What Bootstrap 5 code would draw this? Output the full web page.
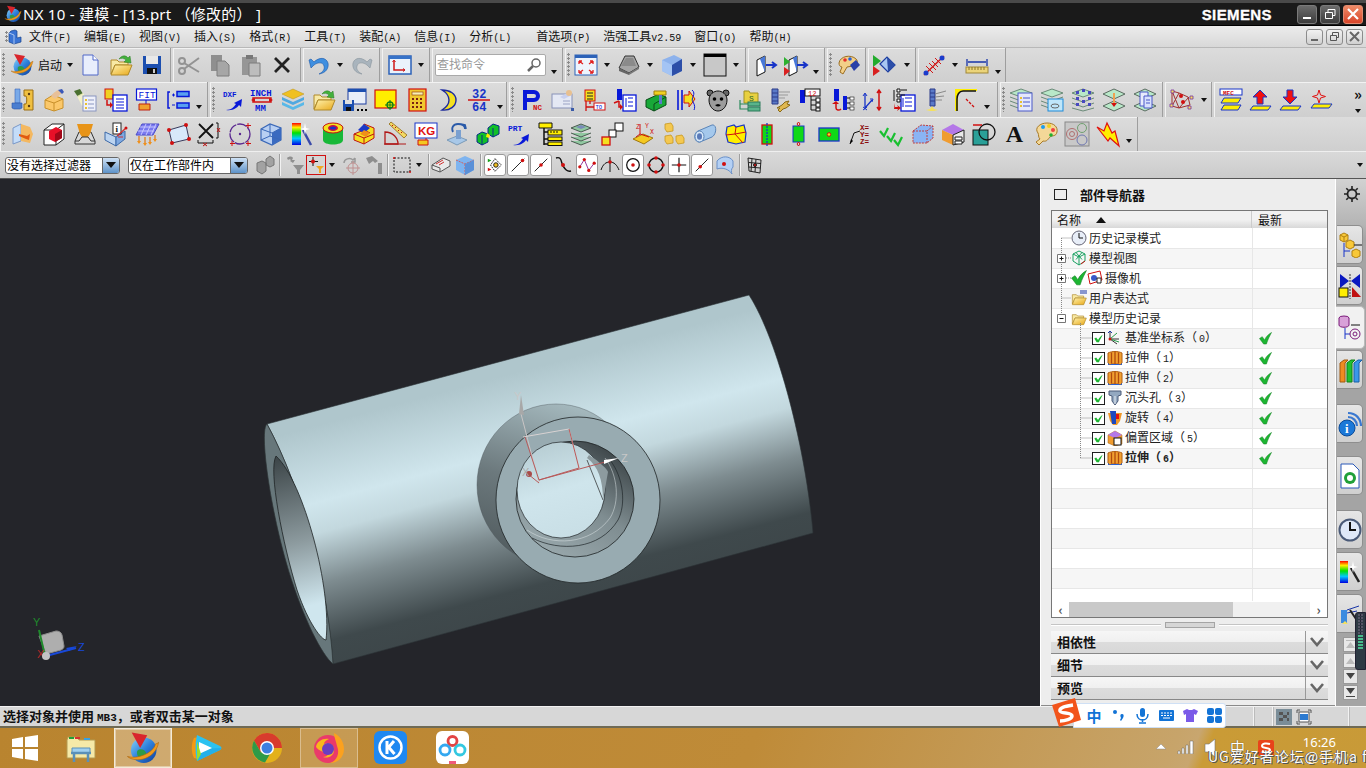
<!DOCTYPE html>
<html lang="zh">
<head>
<meta charset="UTF-8">
<title>NX 10 - 建模</title>
<link href="https://cdn.jsdelivr.net/npm/bootstrap@5.3.2/dist/css/bootstrap.min.css" rel="stylesheet">
<style>
body{width:1366px;height:768px;overflow:hidden;background:#d4d4d4;font-family:"Noto Sans CJK SC","Liberation Sans",sans-serif;font-size:12px;line-height:1;color:#111}
.svgdefs{position:absolute;width:0;height:0}
.mono{font-family:"Liberation Mono",monospace;font-size:10px}
.titlebar{height:26px;background:#1a1a1a;border-top:3px solid #4a4a4a;border-bottom:1px solid #000;color:#fff;padding-left:4px}
.titlebar .ttl{font-size:15px;margin-left:1px;letter-spacing:.25px;font-family:"Noto Sans","Noto Sans CJK SC",sans-serif;white-space:pre}
.siemens{font:bold 15px "Liberation Sans",sans-serif;letter-spacing:.4px;margin-right:25px;-webkit-text-stroke:.3px #fff}
.winbtn{width:20px;height:19px;margin-right:3px;border-radius:3px;background:linear-gradient(#6b6b6b,#3c3c3c);border:1px solid #7a7a7a;display:flex;align-items:center;justify-content:center}
.winbtn.cls{background:linear-gradient(#ee8a66,#d9452a);border-color:#e08a70}
.menubar{height:22px;background:linear-gradient(#ececec,#d8d8d8);border-bottom:1px solid #b8b8b8;padding-left:3px}
.menubar .mi{white-space:nowrap}
.mdibtn{width:17px;height:16px;margin-right:3px;border:1px solid #8c8c8c;border-radius:3px;background:linear-gradient(#f2f2f2,#d0d0d0);display:flex;align-items:center;justify-content:center}
.me-mn{margin-right:13px}.me-mx{margin-right:25px}.menuitems{margin-left:7px}
.tbrow{background:linear-gradient(#dcdcdc,#cfcfcf)}
.r1{height:34px}.r2{height:35px}.r3{height:34px}
.r4{height:28px;background:linear-gradient(#d9d9d9,#cbcbcb);border-top:1px solid #efefef;border-bottom:1px solid #555}
.tg{height:100%;display:flex;align-items:center;border-right:1px solid #9e9e9e;box-shadow:inset 1px 1px 0 #f2f2f2;flex:none;margin-right:2px}
.tg.bare{border-right:0;margin-right:0}
.grip{width:5px;align-self:stretch;margin:5px 0;flex:none;background:radial-gradient(circle at 1.5px 1.5px,#8a8a8a 1px,transparent 1.2px) 2px 0/3px 4px repeat-y}
.tb{width:31px;height:100%;display:flex;align-items:center;justify-content:center;flex:none}
.tb.nw{width:29px}
.tb svg{width:24px;height:24px;overflow:visible}
.cr{width:12px;flex:none;display:flex;justify-content:center}
.cr::after{content:"";border-left:3.5px solid transparent;border-right:3.5px solid transparent;border-top:4px solid #111}
.cr.lo{align-self:flex-end;margin-bottom:8px}
.qfind{width:111px;height:22px;margin:0 2px 0 3px;background:#fff;border:1px solid #aaa;border-radius:2px;color:#999;padding:3px 1px;position:relative;flex:none}
.qfind svg{position:absolute;right:3px;top:2px;width:16px;height:16px}
.combo{height:17px;background:#fff;border:1px solid #666;border-radius:3px;display:flex;align-items:center;padding-left:1px;flex:none;font-size:12px;color:#000}
.combo .lab{flex:1}
.combo .dd{width:17px;height:100%;background:linear-gradient(#cfe2f6,#5d92c8);border-left:1px solid #666;display:flex;align-items:center;justify-content:center;border-radius:0 2px 2px 0}
.combo .dd::after{content:"";border-left:5px solid transparent;border-right:5px solid transparent;border-top:6px solid #111}
.c1{width:115px;margin-left:5px}.c2{width:120px;margin-left:8px}
.t4{width:23px;height:100%;display:flex;align-items:center;justify-content:center;flex:none}
.t4 svg{width:20px;height:20px}
.t4.boxed svg{background:#fff;border:1px solid #999;border-radius:3px;width:22px;height:22px;padding:1px}
.workarea{height:527px}
.viewport{width:1040px;background:#24252a;flex:none}
.viewport svg{display:block;width:1040px;height:527px}
.partnav{width:296px;flex:none;background:#ededed;border-left:1px solid #fff;border-right:1px solid #fff;padding:0 7px 0 10px;box-shadow:inset 0 -1px 0 #8a8a8a}
.navhead{height:31px;font-weight:700;font-size:13px;padding-left:3px}
.navhead i{display:block;width:13px;height:11px;border:1.5px solid #222;margin-right:13px}
.treebox{height:408px;border:1px solid #777;background:#fff;position:relative;width:277px;flex:none}
.treehead{height:17px;background:linear-gradient(#f2f2f2 0,#f2f2f2 50%,#d8d8d8 100%)}
.treehead>div:first-child{width:200px;padding:3px 0 0 5px;border-right:1px solid #ccc;height:100%;display:flex}
.treehead>div:last-child{padding:3px 0 0 6px}
.sorttri{margin:3px 0 0 15px;border-left:5px solid transparent;border-right:5px solid transparent;border-bottom:6px solid #111;height:0}
.treescroll{height:373px;overflow:hidden;position:relative}
.nav-tbl{table-layout:fixed;margin:0;width:100%}
.nav-tbl td{height:20px;padding:0;border:0;border-bottom:1px solid #e7e7e7;vertical-align:middle;font-size:12px;color:#222;background:#fff;white-space:nowrap}
.nav-tbl tr:nth-child(even) td{background:#f6f6f6}
.nav-tbl td:first-child{width:200px;border-right:1px solid #e7e7e7}
.nav-tbl .lv0{padding-left:19px}
.nav-tbl .lv1{padding-left:40px}
.nodecell{display:flex;align-items:center;height:19px}
.nodecell svg{width:16px;height:16px;flex:none}
.nodecell .chk{width:13px;height:13px;margin-right:2px}
.nodecell span{margin-left:2px}
.okcol{padding-left:6px!important}
.okcol svg{width:13px;height:13px;display:block}
.treelines{position:absolute;left:0;top:0;width:60px;height:240px;pointer-events:none}
.hscroll{height:16px;background:#fff;display:flex;align-items:center;position:relative}
.hscroll .hb{width:17px;text-align:center;font-weight:700;color:#555;font-size:13px;flex:none}
.hscroll .trk{flex:1;height:15px;background:#f0f0f0}
.hscroll .thm{width:164px;height:15px;background:#c9c9c9}
.sash{height:13px;flex:none}
.sash i{flex:1;height:1px;background:#c4c4c4;border-bottom:1px solid #fff;box-sizing:content-box}
.sash b{width:50px;height:6px;margin:0 4px;background:#d6d6d6;border:1px solid #a5a5a5;display:block}
.accbar{height:23px;width:277px;flex:none;background:linear-gradient(#f6f6f6 0,#f0f0f0 50%,#dcdcdc 52%,#d8d8d8 100%);border-bottom:1px solid #888;display:flex;align-items:center;font-weight:700;font-size:13px;padding-left:6px}
.accbar .lbl{flex:1;padding-bottom:2px}
.accbar .chev{width:23px;height:100%;border-left:1px solid #999;display:flex;align-items:center;justify-content:center}
.sidebar{flex:1;background:linear-gradient(#d2d2d2 0,#b4b4b4 46px,#a4a4a4 60px);position:relative;padding-left:1px}
.gearcell{height:46px;padding-left:7px;padding-top:7px}
.stab{width:26px;height:39px;background:linear-gradient(#e6e6e6,#cfcfcf);border:1px solid #8e8e8e;border-left:0;border-radius:0 5px 5px 0;display:flex;align-items:center;justify-content:center}
.stab svg{width:24px;height:26px}
.stab.on{width:29px;height:43px;background:#f1f1f1;border-color:#bbb;margin-left:-1px}
.s1{margin-top:1px}.s2{margin-top:2px}.s3{margin-top:3px}.s13{margin-top:13px}.s15{margin-top:15px}
.sbtn{width:15px;height:15px;margin:1px 0 0 6px;background:#e8e8e8;border:1px solid #999;display:flex;align-items:center;justify-content:center}
.sbtn.first{margin-top:4px}
.sldr{position:absolute;right:0;top:433px;width:11px;height:58px;background:#2e3a44;border-radius:3px 0 0 3px;border:1px solid #223}
.sldr i{display:block;height:2px;margin:1px 2px;background:repeating-linear-gradient(90deg,#556 0 2px,#223 2px 3px)}
.sldr i.g{background:#46b98a}
.statusbar{height:22px;background:#d7d7d7;border-top:1px solid #f2f2f2;border-bottom:2px solid #6f6a55;font-weight:700;font-size:13px;padding-left:3px}
.statusbar .mono{font-size:11px}
.stcell{height:100%;border-left:1px solid #f2f2f2;box-shadow:inset 1px 0 0 #bbb}
.taskbar{height:40px;background:linear-gradient(111deg,#b9842f 0,#bf8b38 55%,#c7a46a 85.5%,#c8a66f 87%,#ca9b36 88%,#c89a38 100%);position:relative}
.tkitem{width:58px;height:40px;display:flex;align-items:center;justify-content:center;flex:none;margin-right:4px}
.tkitem svg{width:34px;height:34px}
.tkitem.cur{background:rgba(255,255,255,.3);border:1px solid #f3ead8;box-shadow:inset 0 0 0 1px rgba(255,255,255,.4)}
.tkitem.hot{background:rgba(255,255,255,.16);border:1px solid rgba(255,255,255,.35)}
.tray{margin-left:auto;height:100%;position:relative;width:226px;color:#fff}
.clock{position:absolute;right:30px;top:5px;font:13px "Noto Sans",sans-serif}
.trayic{position:absolute}
.wm{position:absolute;left:68px;top:21px;color:#fdfdfd;text-shadow:1px 1px 0 #555,-1px 0 0 #555;font-size:14px;white-space:nowrap;letter-spacing:1px}
.dat{position:absolute;left:165px;top:22px;color:#fff;font:12px "Noto Sans",sans-serif;opacity:.7}
.imebar{position:absolute;left:1050px;top:698px;height:30px;width:176px}
.imebar .body{position:absolute;left:23px;top:5px;width:153px;height:25px;background:#fff;border:1px solid #cfe0f5;border-radius:0 3px 3px 0;display:flex;align-items:center;color:#1273d6;font-weight:700;font-size:15px}
.imebar .logo{position:absolute;left:0;top:0;width:32px;height:30px}
.imeitem{width:24px;display:flex;justify-content:center;flex:none}
.imeitem svg{width:17px;height:17px}
.imeitem.first{margin-left:8px}
.g171{width:171px}.g128{width:128px}.g77{width:77px}.g48{width:48px;padding-left:2px}.g131{width:131px}.g181{width:181px}.g77b{width:77px;padding-left:4px}.g39{width:39px}.g48b{width:48px}.g88{width:88px}
.tb.lg{width:24px;margin-left:5px}.lbl0{width:32px;padding-left:4px;flex:none}.cr.cn{width:8px}.cr.lo2{margin-left:2px}
.g208{width:208px}.g299{width:297px}.g489{width:489px}.g163{width:163px}.g48c{width:47px}.g150{flex:1}
.tg i.spc2{width:2px}.tg i.spc3{width:3px}.tg i.spc7{width:2px}.tb.w28{width:28px}.tb.w29{width:29px}
.ovfl{margin-left:auto;margin-right:2px;width:12px;display:flex;flex-direction:column;align-items:center;gap:8px}
.ovfl b{font-size:15px}
.cr.lo3{margin-left:2px}
.g1137{width:1138px}.bigA{font:700 24px "Liberation Serif",serif;color:#111}
.t4.ms2{margin-left:5px}.t4.ms3{margin-left:2px}.t4.w20{width:20px}.t4.w22{width:22px}.t4.w24{width:24px}.t4.w25{width:25px}
.vsep{width:1px;height:22px;background:#9e9e9e;box-shadow:1px 0 0 #f2f2f2;flex:none;display:block}
.sa{margin-left:3px;margin-right:3px}.sb{margin:0 2px 0 0}.sc{margin:0 0 0 4px}.sd{margin:0 2px 0 3px}.se{margin:0 3px}
.cr.cw{width:11px}
.stc1{width:19px}.stc2{width:76px;padding-left:3px}.stc3{width:18px}.m0{font-size:10px}
.winlogo{margin:0 13px 0 11px;flex:none}
.ti1{left:15px;top:15px}.ti2{left:37px;top:12px}.ti3{left:64px;top:10px}.ti4{left:90px;top:11px;color:#fff;font-size:15px;text-shadow:0 0 1px #333}.ti5{left:118px;top:12px}
</style>
</head>
<body>
<svg class="svgdefs" xmlns="http://www.w3.org/2000/svg">
  <defs>
    <linearGradient id="gb" x1="0" y1="0" x2="1" y2="1"><stop offset="0" stop-color="#8ad4f8"/><stop offset=".5" stop-color="#2d80dc"/><stop offset="1" stop-color="#0f3c98"/></linearGradient>
    <linearGradient id="gy" x1="0" y1="0" x2="1" y2="1"><stop offset="0" stop-color="#fff3b0"/><stop offset="1" stop-color="#e8a818"/></linearGradient>
    <linearGradient id="gr" x1="0" y1="0" x2="0" y2="1"><stop offset="0" stop-color="#ff0000"/><stop offset=".2" stop-color="#ffee00"/><stop offset=".45" stop-color="#00e000"/><stop offset=".7" stop-color="#00c8ff"/><stop offset="1" stop-color="#0000e0"/></linearGradient>
    <linearGradient id="gbody" gradientUnits="userSpaceOnUse" x1="300" y1="430" x2="364" y2="670"><stop offset="0" stop-color="#afc6cc"/><stop offset=".3" stop-color="#d0e6ed"/><stop offset=".42" stop-color="#c3d8de"/><stop offset=".62" stop-color="#7e8c90"/><stop offset=".85" stop-color="#3f494c"/><stop offset="1" stop-color="#3d4649"/></linearGradient>
    <linearGradient id="ghole" gradientUnits="userSpaceOnUse" x1="280" y1="460" x2="326" y2="640"><stop offset="0" stop-color="#3f484b"/><stop offset=".45" stop-color="#8c9a9e"/><stop offset=".8" stop-color="#cfe6ee"/><stop offset="1" stop-color="#cfe6ee"/></linearGradient>
    <linearGradient id="gboss" gradientUnits="userSpaceOnUse" x1="570" y1="405" x2="520" y2="570"><stop offset="0" stop-color="#a4b8bd"/><stop offset=".5" stop-color="#6c797d"/><stop offset="1" stop-color="#4e585b"/></linearGradient>
    <linearGradient id="gin" gradientUnits="userSpaceOnUse" x1="625" y1="450" x2="560" y2="555"><stop offset="0" stop-color="#363e41"/><stop offset=".55" stop-color="#7f8d91"/><stop offset="1" stop-color="#96a5a9"/></linearGradient>
    <linearGradient id="glit" gradientUnits="userSpaceOnUse" x1="545" y1="440" x2="575" y2="540"><stop offset="0" stop-color="#b6ccd2"/><stop offset=".5" stop-color="#cfe5ec"/><stop offset="1" stop-color="#c8dee5"/></linearGradient>
    <symbol id="nxl" viewBox="0 0 24 24">
      <circle cx="12.500" cy="13.500" r="9" fill="url(#gb)"/>
      <path d="M8 14c2-2 5-1 6 1s-1 5-3 5-4-4-3-6z" fill="#2e9b48"/>
      <path d="M1 18c6 5 20 2 22-10-1 1-2 1-2 1-2 7-13 11-20 9z" fill="#ef9a1d" stroke="#a8620c" stroke-width=".4"/>
      <path d="M4 1l11 2-5 9z" fill="#d9252c"/>
    </symbol>
    <symbol id="tick" viewBox="0 0 14 14"><path d="M.5 7l3-2 2.500 3.500C7.500 5 10 2.500 13.500.5c-1.500 3-4 7.500-5.500 12.500H5z" fill="#1db532" stroke="#0c7d1c" stroke-width=".5"/></symbol>
    <symbol id="cbx" viewBox="0 0 14 14"><rect x=".5" y=".5" width="13" height="13" fill="#fff" stroke="#111"/><path d="M2.500 7l2-1 2 2.500c1.500-2.500 3-4 5-5.500-1 2.500-3 5.500-4 8H5z" fill="#1db532"/></symbol>
    <symbol id="ext" viewBox="0 0 16 16"><path d="M1 3c4-2 10-2 14 0v10l-2 2-1-1H4l-1 1-2-2z" fill="#f0a030" stroke="#b05c10"/><path d="M4.500 2.500v11M8 2v12M11.500 2.500v11" stroke="#b04a10" stroke-width="1.300"/><path d="M1 13l2 2 1-1h8l1 1 2-2v2H1z" fill="#2a62d0"/></symbol>
    <symbol id="fldr" viewBox="0 0 24 24"><path d="M2 7h6l2 2h9v3H6l-4 9z" fill="#f8e9a4" stroke="#b08a2a"/><path d="M6 12h17l-4 10H2z" fill="url(#gy)" stroke="#b08a2a"/></symbol>
    <symbol id="fldg" viewBox="0 0 24 24"><use href="#fldr"/><path d="M10 6c3-4 7-4 9-1l2-2 1 7-7-1 2-2c-2-2-5-2-7-1z" fill="#43b03c" stroke="#267a20" stroke-width=".5"/></symbol>
  </defs>
</svg>

<!-- title bar -->
<div class="titlebar d-flex align-items-center">
  <svg width="18" height="18"><use href="#nxl"/></svg>
  <span class="ttl">NX 10 - 建模 - [13.prt （修改的） ]</span>
  <span class="siemens ms-auto">SIEMENS</span>
  <div class="winbtn"><svg width="12" height="12"><path d="M2 9h8v2H2z" fill="#fff"/></svg></div>
  <div class="winbtn"><svg width="12" height="12" fill="none" stroke="#fff"><path d="M1.500 4.500h7v6h-7zM4 4V1.500h7v6H9"/></svg></div>
  <div class="winbtn cls"><svg width="14" height="14" stroke="#fff" stroke-width="2.200"><path d="M2 2l10 10M12 2L2 12"/></svg></div>
</div>

<!-- menu -->
<div class="menubar d-flex align-items-center">
  <div class="grip"></div>
  <svg width="14" height="16" viewBox="0 0 14 16"><path d="M3 2l4-1 2 1v7l4-1v5l-7 2-5-2V4z" fill="#3a74d4" stroke="#17448e" stroke-width=".7"/><path d="M1 4l5 2v9" stroke="#a8c4f0" fill="none"/></svg>
  <div class="d-flex menuitems">
    <span class="mi me-mn">文件<span class="mono">(F)</span></span>
    <span class="mi me-mn">编辑<span class="mono">(E)</span></span>
    <span class="mi me-mn">视图<span class="mono">(V)</span></span>
    <span class="mi me-mn">插入<span class="mono">(S)</span></span>
    <span class="mi me-mn">格式<span class="mono">(R)</span></span>
    <span class="mi me-mn">工具<span class="mono">(T)</span></span>
    <span class="mi me-mn">装配<span class="mono">(A)</span></span>
    <span class="mi me-mn">信息<span class="mono">(I)</span></span>
    <span class="mi me-mx">分析<span class="mono">(L)</span></span>
    <span class="mi me-mn">首选项<span class="mono">(P)</span></span>
    <span class="mi me-mn">浩强工具<span class="mono">v2.59</span></span>
    <span class="mi me-mn">窗口<span class="mono">(O)</span></span>
    <span class="mi">帮助<span class="mono">(H)</span></span>
  </div>
  <div class="d-flex ms-auto">
    <div class="mdibtn"><svg width="11" height="11"><path d="M2 8h7v2H2z" fill="#666"/></svg></div>
    <div class="mdibtn"><svg width="11" height="11" fill="none" stroke="#555"><path d="M1.500 4.500h6v5h-6zM3.500 4V1.500h6v5H8"/></svg></div>
    <div class="mdibtn"><svg width="11" height="11" stroke="#666" stroke-width="2"><path d="M1 1l9 9M10 1l-9 9"/></svg></div>
  </div>
</div>

<!-- toolbar row 1 -->
<div class="tbrow r1 d-flex">
  <div class="tg g171"><div class="grip"></div>
    <span class="tb lg"><svg><use href="#nxl"/></svg></span><span class="lbl0">启动</span><span class="cr cn"></span>
    <span class="tb"><svg viewBox="0 0 24 24"><path d="M5 2h10l5 5v15H5z" fill="#e8eefc" stroke="#5068c8"/><path d="M15 2v5h5" fill="#fff" stroke="#5068c8"/></svg></span>
    <span class="tb"><svg><use href="#fldg"/></svg></span>
    <span class="tb"><svg viewBox="0 0 24 24"><path d="M3 3h18v18H3z" fill="#1c4fb0"/><path d="M6 3h12v8H6z" fill="#e8e8e8"/><path d="M7 15h10v6H7z" fill="#111"/><path d="M13 16h2v4h-2z" fill="#ccc"/></svg></span>
  </div>
  <div class="tg g128">
    <span class="tb"><svg viewBox="0 0 24 24" fill="none" stroke="#939393" stroke-width="2"><circle cx="5" cy="18" r="3"/><circle cx="5" cy="8" r="3"/><path d="M7 16L22 5M7 10l15 9" /></svg></span>
    <span class="tb"><svg viewBox="0 0 24 24"><path d="M3 2h11v16H3z" fill="#8f8f8f"/><path d="M9 8h8l4 4v11H9z" fill="#a6a6a6" stroke="#7c7c7c"/></svg></span>
    <span class="tb"><svg viewBox="0 0 24 24"><path d="M3 4h15v18H3z" fill="#969696"/><path d="M7 2h7v4H7z" fill="#777"/><path d="M10 10h11v13H10z" fill="#bdbdbd" stroke="#7c7c7c"/></svg></span>
    <span class="tb"><svg viewBox="0 0 24 24" stroke="#222" stroke-width="2.800"><path d="M5 5l14 14M19 5L5 19"/></svg></span>
  </div>
  <div class="tg g77">
    <span class="tb"><svg viewBox="0 0 24 24"><path d="M2 7l2 8 3-3c4-3 9-3 10 1 1 3-1 6-5 8 7-1 10-6 9-11-2-6-9-6-14-1l-3-3z" fill="#3f8fe0" stroke="#1b58a8" stroke-width=".6"/></svg></span><span class="cr"></span>
    <span class="tb"><svg viewBox="0 0 24 24"><path d="M22 7l-2 8-3-3c-4-3-9-3-10 1-1 3 1 6 5 8-7-1-10-6-9-11 2-6 9-6 14-1l3-3z" fill="#a9b4bd" stroke="#88939c" stroke-width=".6"/></svg></span>
  </div>
  <div class="tg g48"><span class="tb"><svg viewBox="0 0 24 24"><rect x="1" y="3" width="22" height="18" fill="#eaf3fc" stroke="#2c62b8" stroke-width="1.500"/><path d="M1 3h22v3H1z" fill="#3672c8"/><path d="M6 8v9h11" stroke="#d01818" stroke-width="1.500" fill="none"/><path d="M4.500 9L6 7l1.500 2M15 15.500l2 1.500-2 1.500" stroke="#d01818" fill="none"/></svg></span><span class="cr"></span></div>
  <div class="tg g131"><div class="qfind">查找命令<svg viewBox="0 0 16 16" fill="none" stroke="#666" stroke-width="1.500"><circle cx="10" cy="6" r="4"/><path d="M7 9l-5 5" stroke-width="2.500"/></svg></div><span class="cr lo"></span></div>
  <div class="tg g181"><div class="grip"></div>
    <span class="tb"><svg viewBox="0 0 24 24"><rect x="1" y="2" width="22" height="20" fill="#eef4fc" stroke="#2c62b8"/><path d="M1 2h22v3H1z" fill="#2c62b8"/><path d="M5 8l4 3M5 8v3M5 8h3M19 8l-4 3M19 8v3M19 8h-3M5 20l4-3M5 20v-3M5 20h3M19 20l-4-3M19 20v-3M19 20h-3" stroke="#e02020" stroke-width="1.300"/></svg></span><span class="cr"></span>
    <span class="tb"><svg viewBox="0 0 24 24"><path d="M2 15L8 3h9l5 11-10 6z" fill="#a5a5a5" stroke="#333"/><path d="M4 13l5-8h7l3 8z" fill="#8a8a8a"/><path d="M2 15l10 5v2L2 18z" fill="#666"/><path d="M12 20l10-6v2l-10 6z" fill="#777"/></svg></span><span class="cr"></span>
    <span class="tb"><svg viewBox="0 0 24 24"><path d="M2 7l12-5 8 4v12l-10 5-10-5z" fill="#8db2ec"/><path d="M2 7l10 5v11L2 18z" fill="#a4c4f4"/><path d="M12 12l10-6v12l-10 5z" fill="#2c4ea8"/></svg></span><span class="cr"></span>
    <span class="tb"><svg viewBox="0 0 24 24"><rect x="1" y="1" width="22" height="22" fill="#c8c8c8" stroke="#111"/><path d="M1 1h22v3H1z"/></svg></span><span class="cr"></span>
  </div>
  <div class="tg g77b">
    <span class="tb nw"><svg viewBox="0 0 24 24"><path d="M2 7l8-4v16l-8 4z" fill="#fff" stroke="#111"/><path d="M5 6l5-3v16" fill="#4878d8"/><path d="M11 12h10M17 9l4 3-4 3" stroke="#1834c8" stroke-width="2" fill="none"/></svg></span>
    <span class="tb nw"><svg viewBox="0 0 24 24"><path d="M5 7l8-4v16l-8 4z" fill="#fff" stroke="#111"/><path d="M9 5l4-2v16" fill="#4878d8"/><path d="M0 4l6 5-6 4z" fill="#2cb030"/><path d="M0 14l6 4-6 5z" fill="#d82020"/><path d="M13 12h9M19 9l4 3-4 3" stroke="#1834c8" stroke-width="2" fill="none"/></svg></span><span class="cr lo"></span>
  </div>
  <div class="tg g39"><div class="grip"></div>
    <span class="tb"><svg viewBox="0 0 24 24"><path d="M3 10c1-7 12-9 17-4 3 3 1 7-3 7l-6 1-4 7-3-2 2-5c-2 0-3-2-3-4z" fill="#f2cf88" stroke="#9c6e22"/><circle cx="9" cy="7" r="1.800" fill="#e62b2b"/><circle cx="14" cy="6" r="1.800" fill="#2a62d8"/><path d="M14 12l6-5 4 5-6 6z" fill="#2a3fa8"/></svg></span>
  </div>
  <div class="tg g48b">
    <span class="tb"><svg viewBox="0 0 24 24"><path d="M1 2l8 6-8 6z" fill="#22ab2c"/><path d="M1 13l7 5-7 5z" fill="#d82020"/><path d="M8 11l7-7 8 8-7 7z" fill="#a9c8f2" stroke="#1c3ca0" stroke-width="1.200"/><path d="M15 4l8 8-7 7z" fill="#2c4ea8"/></svg></span><span class="cr lo2"></span>
  </div>
  <div class="tg g88">
    <span class="tb"><svg viewBox="0 0 24 24"><path d="M2 22L22 3" stroke="#d01818" stroke-width="1.500"/><path d="M7 10l7 7M10 8l6 6M4 13l7 7M13 5l6 6" stroke="#d01818"/><circle cx="4" cy="20" r="2.500" fill="#1b3ccc"/><circle cx="20" cy="5" r="2.500" fill="#1b3ccc"/></svg></span><span class="cr"></span>
    <span class="tb"><svg viewBox="0 0 24 24"><path d="M2 6v7M22 6v7M3 9h18" stroke="#1834a8" stroke-width="1.300"/><rect x="1" y="14" width="22" height="6" fill="#ebd47a" stroke="#a08838"/><path d="M4 14v3M7 14v3M10 14v3M13 14v3M16 14v3M19 14v3" stroke="#8a7428"/></svg></span><span class="cr lo"></span>
  </div>
</div>

<!-- toolbar row 2 -->
<div class="tbrow r2 d-flex">
  <div class="tg g208"><div class="grip"></div><i class="spc2"></i>
    <span class="tb"><svg viewBox="0 0 24 24"><path d="M4 1h5v14H4z" fill="#7aaae8" stroke="#3a66b8" stroke-width=".6"/><path d="M1 15h10v5l-2 1H3l-2-1z" fill="#4a7ed0" stroke="#2a56a8" stroke-width=".6"/><path d="M13 2h9v20h-9v-6h2c1-2 1-6 0-8h-2z" fill="#f0c040" stroke="#9c6e12"/><circle cx="18" cy="6" r="1.200" fill="#5a3a10"/><circle cx="18" cy="18" r="1.200" fill="#5a3a10"/></svg></span>
    <span class="tb"><svg viewBox="0 0 24 24"><path d="M3 12l8-5 10 4v9l-9 3-9-3z" fill="#fbc86a" stroke="#c8902a"/><path d="M3 12l9 3 9-4M12 15v8" stroke="#c8902a" fill="none"/><path d="M9 8c2-3 5-5 7-6l4 3-7 6z" fill="#e8c098"/><path d="M16 2l4-1 2 3-2 2z" fill="#3a58b8"/></svg></span>
    <span class="tb"><svg viewBox="0 0 24 24"><path d="M1 3l6-2 3 5-5 3z" fill="#4a7030"/><path d="M4 8l6-3 6 9-7 4z" fill="#f8f6c8" opacity=".85"/><rect x="10" y="8" width="13" height="15" fill="#eef0fa" stroke="#8a96c0"/><path d="M12 11h2v2h-2zM12 15h2v2h-2zM12 19h2v2h-2z" fill="#e8c030"/><path d="M15 12h6M15 16h6M15 20h6" stroke="#8a96c0"/></svg></span>
    <span class="tb"><svg viewBox="0 0 24 24"><rect x="1" y="1" width="8" height="10" fill="#f0d020" stroke="#d01010"/><rect x="9" y="7" width="14" height="16" fill="#fff" stroke="#0818d8" stroke-width="1.300"/><path d="M12 11h8M12 14h8M12 17h8M12 20h8" stroke="#0818d8"/><path d="M3 12v5h4" stroke="#d01010" stroke-width="1.500" fill="none"/><path d="M6 14l3 3-3 3z" fill="#d01010"/></svg></span>
    <span class="tb"><svg viewBox="0 0 24 24"><rect x="1.500" y="1" width="20" height="11" fill="#fff" stroke="#0818d8" stroke-width="1.200"/><text x="3.500" y="10" font-size="9.500" fill="#0818d8" font-family="Liberation Mono">FIT</text><path d="M11 12v4" stroke="#0818d8"/><path d="M4 16h11v6H4z" fill="#f0a030" stroke="#c02010"/></svg></span>
    <span class="tb"><svg viewBox="0 0 24 24" fill="none" stroke="#0818d8" stroke-width="1.500"><path d="M4 4H2v16h2M2 12h0"/><path d="M6 7h3M7.500 5.500v3M6 17h3" stroke-width="1"/><rect x="11" y="3.500" width="12" height="5" fill="#5aa0f0"/><rect x="11" y="15" width="12" height="5" fill="#5aa0f0"/></svg></span><span class="cr lo"></span>
  </div>
  <div class="tg g299"><div class="grip"></div><i class="spc3"></i>
    <span class="tb w28"><svg viewBox="0 0 24 24"><text x="3" y="9" font-size="7.500" fill="#0818d8" font-family="Liberation Mono" font-weight="700">DXF</text><path d="M6 22c5 0 8-3 10-6l-2-1 8-4-1 8-2-2c-2 3-6 6-13 5z" fill="#0818d8"/></svg></span>
    <span class="tb"><svg viewBox="0 0 24 24"><text x="0" y="8" font-size="9" fill="#0818d8" font-family="Liberation Mono" font-weight="700">INCH</text><path d="M3 10h18v4H3z" fill="none" stroke="#d01010" stroke-width="1.500"/><path d="M1 12l4-2v4zM23 12l-4-2v4z" fill="#d01010"/><text x="5" y="23" font-size="9" fill="#0818d8" font-family="Liberation Mono" font-weight="700">MM</text></svg></span>
    <span class="tb"><svg viewBox="0 0 24 24"><path d="M12 1l11 5-11 5L1 6z" fill="#f0c020" stroke="#b89018" stroke-width=".5"/><path d="M1 9l11 5 11-5v3l-11 5-11-5z" fill="#50a8e0"/><path d="M1 14l11 5 11-5v3l-11 5-11-5z" fill="#58b8e8"/></svg></span>
    <span class="tb"><svg><use href="#fldg"/></svg></span>
    <span class="tb"><svg viewBox="0 0 24 24"><rect x="5" y="1" width="18" height="15" fill="#e8eef8" stroke="#1c3ca0"/><path d="M5 1h18v3H5z" fill="#1c4fb0"/><rect x="0" y="12" width="11" height="11" fill="#1c4fb0"/><path d="M2 12h7v4H2z" fill="#e0e0e0"/><path d="M3 19h5v4H3z" fill="#111"/><path d="M14 21h2v2h-2zM18 21h2v2h-2zM22 21h2v2h-2z"/></svg></span>
    <span class="tb"><svg viewBox="0 0 24 24"><rect x="1" y="2" width="21" height="18" fill="#ffee00" stroke="#d01010" stroke-width="1.200"/><circle cx="16" cy="17" r="3" fill="none" stroke="#0a7a18" stroke-width="1.300"/><path d="M16 12v10M11 17h10" stroke="#0a7a18"/></svg></span>
    <span class="tb"><svg viewBox="0 0 24 24"><rect x="4" y="1" width="17" height="22" fill="#f0c830" stroke="#d01010" stroke-width="1.200"/><rect x="7" y="4" width="11" height="3" fill="#f8f0b0" stroke="#8a3010" stroke-width=".6"/><path d="M7 10h2v2H7zM11 10h2v2h-2zM15 10h2v2h-2zM7 14h2v2H7zM11 14h2v2h-2zM15 14h2v2h-2zM7 18h2v2H7zM11 18h2v2h-2zM15 18h2v2h-2z" fill="#7a2010"/></svg></span>
    <span class="tb"><svg viewBox="0 0 24 24"><path d="M6 2c8 0 14 4 14 10s-6 11-14 10c5-3 7-7 7-10S11 5 6 2z" fill="#f4e020" stroke="#1c2aa0" stroke-width="1.400"/></svg></span>
    <span class="tb"><svg viewBox="0 0 24 24"><text x="5" y="10" font-size="12" fill="#1834c8" font-family="Liberation Mono" font-weight="700">32</text><path d="M1 12h22" stroke="#d01010" stroke-width="1.500"/><text x="5" y="23" font-size="12" fill="#1834c8" font-family="Liberation Mono" font-weight="700">64</text></svg></span><span class="cr lo"></span>
  </div>
  <div class="tg g489"><div class="grip"></div><i class="spc2"></i>
    <span class="tb"><svg viewBox="0 0 24 24"><path d="M3 2h11a6 6 0 010 12H7v8H3zM7 6v4h7a2 2 0 000-4z" fill="#0818d8"/><text x="13" y="22" font-size="7.500" fill="#d01010" font-family="Liberation Mono" font-weight="700">NC</text></svg></span>
    <span class="tb"><svg viewBox="0 0 24 24"><rect x="1" y="6" width="20" height="14" fill="#e4e8f4" stroke="#8892b8"/><path d="M12 13h7M12 16h7" stroke="#9aa2c4"/><path d="M9 9l7-4 3-2 2 3-2 2-6 3z" fill="#c8d0f0"/><circle cx="18" cy="5" r="3" fill="#e8c090"/><path d="M20 20h3v3h-3z" fill="#3a5aa8"/></svg></span>
    <span class="tb"><svg viewBox="0 0 24 24"><rect x="3" y="2" width="10" height="11" fill="#f4e020" stroke="#d01010"/><path d="M5 5h6M5 8h6M5 11h6" stroke="#222"/><path d="M8 13v3M4 13v10M4 19h8" stroke="#d01010" stroke-width="1.300"/><rect x="12" y="15" width="11" height="7" fill="#fff" stroke="#d01010"/><text x="13.500" y="21" font-size="5.500" font-family="Liberation Mono" fill="#0818d8">TO</text></svg></span>
    <span class="tb"><svg viewBox="0 0 24 24"><rect x="4" y="1" width="5" height="11" fill="#0818d8"/><rect x="10" y="7" width="13" height="16" fill="#fff" stroke="#0818d8" stroke-width="1.300"/><path d="M15 10h5M15 14h5M15 18h5M13 10v9" stroke="#0818d8"/><path d="M6 13v6h3M1 15l5-2" stroke="#d01010" stroke-width="1.500" fill="none"/><path d="M7 16l3 3-3 3z" fill="#d01010"/></svg></span>
    <span class="tb"><svg viewBox="0 0 24 24"><path d="M2 12l13-6 7 3v8l-12 6-8-4z" fill="#18a838" stroke="#0a4a18"/><path d="M10 23v-7l12-7" stroke="#0a4a18" fill="none"/><path d="M10 3h12v4H10z" fill="#f0d020" stroke="#a08010"/><path d="M15 7h3v9h-3z" fill="#5a7ac8"/></svg></span>
    <span class="tb"><svg viewBox="0 0 24 24"><path d="M3 2v20M7 2v20" stroke="#0818d8" stroke-width="1.600"/><path d="M9 7h5V3l6 8-6 8v-4H9z" fill="#f4e020" stroke="#d01010"/><path d="M17 2c5 4-2 8 1 12 2 3 2 6 1 8" stroke="#0818d8" fill="none"/></svg></span>
    <span class="tb"><svg viewBox="0 0 24 24"><circle cx="4" cy="5" r="3" fill="#666" stroke="#111"/><circle cx="20" cy="5" r="3" fill="#666" stroke="#111"/><path d="M3 12c0-6 5-9 9-9s9 3 9 9-4 11-9 11-9-5-9-11z" fill="#9c9c9c" stroke="#111"/><circle cx="8.500" cy="11" r="1.800"/><circle cx="15.500" cy="11" r="1.800"/><path d="M9 17c2 2 4 2 6 0l-3-1z"/></svg></span>
    <span class="tb"><svg viewBox="0 0 24 24"><path d="M7 3h5l1 2h8v10H7z" fill="#e8d040" stroke="#a09020"/><text x="12" y="13" font-size="8" fill="#2a6a2a" font-family="Liberation Mono">S</text><path d="M3 12v9h8M3 16h8" stroke="#2a8a5a" stroke-width="1.200" fill="none"/><rect x="11" y="14" width="12" height="4" fill="#5ab48a" stroke="#2a7a5a"/><rect x="11" y="19" width="12" height="4" fill="#5ab48a" stroke="#2a7a5a"/></svg></span>
    <span class="tb"><svg viewBox="0 0 24 24"><path d="M4 1h6v15H4z" fill="#5a7ac8" stroke="#2a3a88"/><path d="M4 5h6M4 9h6M4 13h6" stroke="#2a3a88"/><path d="M11 4h11M11 7h9M11 10h6" stroke="#999"/><path d="M9 20l5-3 3-3 4-1-2 3 3 1-4 3-3 1-3 3-2-2 2-2z" fill="#e0b850" stroke="#8a6a18"/></svg></span>
    <span class="tb"><svg viewBox="0 0 24 24" stroke="#111"><rect x="1" y="2" width="5" height="13" fill="#0818d8" stroke="none"/><rect x="6" y="1" width="15" height="7" fill="#fff"/><text x="9" y="7.500" font-size="7" fill="#d01010" stroke="none" font-family="Liberation Mono">12</text><path d="M12 8v14M12 12h5M12 17h5M12 22h5" fill="none"/><rect x="17" y="10" width="4" height="4" fill="#fff"/><rect x="17" y="15" width="4" height="4" fill="#fff"/><rect x="17" y="20" width="4" height="3" fill="#fff"/></svg></span>
    <span class="tb"><svg viewBox="0 0 24 24"><rect x="4" y="1" width="5" height="12" fill="#0818d8"/><rect x="13" y="8" width="4" height="14" fill="#0818d8"/><path d="M6 14v6c0 2 3 3 5 1" stroke="#d01010" stroke-width="1.500" fill="none"/><path d="M2 16l4-3 3 3" fill="#d01010"/><path d="M17 10h3M17 15h3M17 20h3" stroke="#111"/><rect x="20" y="9" width="4" height="3" fill="#fff" stroke="#111" stroke-width=".6"/><rect x="20" y="14" width="4" height="3" fill="#fff" stroke="#111" stroke-width=".6"/><rect x="20" y="19" width="4" height="3" fill="#fff" stroke="#111" stroke-width=".6"/></svg></span>
    <span class="tb"><svg viewBox="0 0 24 24" fill="none"><path d="M12 3v18M10 5l2-3 2 3M10 19l2 3 2-3" stroke="#d01010" stroke-width="1.500" transform="translate(6)"/><path d="M4 6v14l7-8M4 20h0" stroke="#1834c8" stroke-width="1.300"/><path d="M2 8l2-3 2 3M9 11l3 0-1 3" stroke="#1834c8"/><path d="M2 22l4-3M6 22l-4-3" stroke="#1834c8"/></svg></span>
    <span class="tb"><svg viewBox="0 0 24 24"><rect x="9" y="7" width="14" height="16" fill="#fff" stroke="#0818d8" stroke-width="1.300"/><path d="M13 10h7M13 14h7M13 18h7M11 10v9" stroke="#0818d8"/><path d="M5 1h3v3H5zM5 6h3v3H5zM5 11h3v3H5z" fill="#fff" stroke="#111"/><path d="M2 2v11M9 2h6M9 7h4" stroke="#111"/><path d="M3 15v4h3l-1-2 4 3-4 3 1-2H2" fill="#d01010"/></svg></span>
    <span class="tb"><svg viewBox="0 0 24 24"><path d="M7 1h5v17H7z" fill="#5a7ac8" stroke="#2a3a88"/><path d="M7 5h5M7 9h5M7 13h5" stroke="#2a3a88"/><path d="M12 6l11-3M12 9l9-1M12 12l7 0" stroke="#8a8a8a"/><path d="M9 18l2 3 4 1-4 1H7l-4-1 4-1z" fill="#f4e060"/></svg></span>
    <span class="tb"><svg viewBox="0 0 24 24"><path d="M1 1h22v2H8c-3 0-4 3-4 5v15H1z" fill="#ffee00"/><path d="M22 3H9C5 3 3 7 3 11v12" stroke="#111" stroke-width="1.500" fill="none"/><path d="M12 11l2 2M15 14l2 2M18 17l2 2" stroke="#d01010" stroke-width="1.300"/></svg></span><span class="cr lo"></span>
  </div>
  <div class="tg g163"><div class="grip"></div>
    <span class="tb"><svg viewBox="0 0 24 24"><path d="M12 1l11 4-11 4L1 5z" fill="#b8e8c8" stroke="#6a8a78"/><path d="M1 9l11 4 11-4M1 13l11 4 11-4M1 17l11 4 11-4" stroke="#6a8a78" fill="none"/><rect x="9" y="5" width="14" height="18" fill="#e4e8fc" stroke="#4a58c8"/><path d="M11 9h2v2h-2zM11 13h2v2h-2zM11 17h2v2h-2z" fill="#e8c030"/><path d="M14 10h7M14 14h7M14 18h7" stroke="#4a58c8"/></svg></span>
    <span class="tb"><svg viewBox="0 0 24 24"><path d="M12 1l11 4-11 4L1 5z" fill="#b8e8c8" stroke="#6a8a78"/><path d="M1 9l11 4 11-4M1 13l11 4 11-4M1 17l11 4 11-4" stroke="#6a8a78" fill="none"/><rect x="8" y="11" width="15" height="12" fill="#bfe6fa" stroke="#1c8ad8"/><ellipse cx="15" cy="18" rx="4" ry="2" fill="none" stroke="#666"/></svg></span>
    <span class="tb"><svg viewBox="0 0 24 24"><path d="M12 1l11 4-11 4L1 5z" fill="#b8e8c8" stroke="#6a8a78"/><path d="M1 10l11 4 11-4M1 15l11 4 11-4M1 20l11 3 11-3" stroke="#6a8a78" fill="none"/><path d="M5 3h3v3H5zM11 1h3v3h-3zM17 3h3v3h-3zM5 9h3v3H5zM17 9h3v3h-3zM5 15h3v3H5zM17 15h3v3h-3zM11 12h3v3h-3z" fill="#4848c0"/></svg></span>
    <span class="tb"><svg viewBox="0 0 24 24"><path d="M12 1l11 5-11 5L1 6zM12 13l11 5-11 5-11-5z" fill="#b8e8c8" stroke="#5a6a60"/><path d="M12 5v12" stroke="#f0a050" stroke-width="2"/><path d="M9 15h6l-3 4z" fill="#d01010"/></svg></span>
    <span class="tb"><svg viewBox="0 0 24 24"><path d="M12 1l11 5-11 5L1 6zM12 13l11 5-11 5-11-5z" fill="#b8e8c8" stroke="#5a6a60"/><path d="M7 4h8v14H7z" fill="#e8ecfc" stroke="#4a58c8"/><path d="M11 8h8v12h-8z" fill="#d8e0fc" stroke="#4a58c8"/><path d="M13 12h4M13 15h4" stroke="#4a58c8"/></svg></span>
  </div>
  <div class="tg g48c">
    <span class="tb"><svg viewBox="0 0 24 24"><path d="M3 3l7 17 11-3-2-8-9-4-7-2 0 15 7 2M3 18l7-13M20 9L10 20" stroke="#a23030" fill="none"/><path d="M2 2h3v3H2zM21 8h3v3h-3zM1 16h3v3H1zM19 18h3v3h-3z" fill="#f4e060" stroke="#7a30a0" stroke-width=".8"/><circle cx="12" cy="8" r="2" fill="#d01010"/><circle cx="14" cy="14" r="2" fill="#d01010"/></svg></span><span class="cr lo3"></span>
  </div>
  <div class="tg g150 bare"><i class="spc7"></i>
    <span class="tb w29"><svg viewBox="0 0 24 24"><rect x="1" y="1" width="22" height="6" fill="#fff" stroke="#1834c8"/><text x="4" y="6.500" font-size="6" fill="#d01010" font-family="Liberation Mono" font-weight="700">MFC</text><path d="M5 10h17l-3 5H2zM5 17h17l-3 5H2z" fill="#ffee00" stroke="#1834c8"/></svg></span>
    <span class="tb w29"><svg viewBox="0 0 24 24"><path d="M12 2l7 7h-4v7H9V9H5z" fill="#f01010" stroke="#1834c8"/><path d="M5 18h18l-3 4H2z" fill="#ffee00" stroke="#1834c8"/></svg></span>
    <span class="tb"><svg viewBox="0 0 24 24"><path d="M9 2h6v7h4l-7 7-7-7h4z" fill="#f01010" stroke="#1834c8"/><path d="M5 18h18l-3 4H2z" fill="#ffee00" stroke="#1834c8"/></svg></span>
    <span class="tb"><svg viewBox="0 0 24 24"><path d="M10 2l1.500 5 5 1.500-5 1.500L10 15l-1.500-5-5-1.500 5-1.500z" fill="none" stroke="#e01010"/><path d="M5 16h18l-3 4H2z" fill="#ffee00" stroke="#1834c8"/></svg></span>
    <span class="ovfl"><b>»</b><i class="cr"></i></span>
  </div>
</div>

<!-- toolbar row 3 -->
<div class="tbrow r3 d-flex">
  <div class="tg g1137"><div class="grip"></div><i class="spc2"></i>
    <span class="tb"><svg viewBox="0 0 24 24"><path d="M2 6l8-4v17l-8 3z" fill="#c4dcf8" stroke="#7a98c8"/><path d="M10 2l9 3 3 7-3 9-9-2z" fill="#f4b860"/><path d="M8 12l8 2 3-2-1 6-3-1-7-3z" fill="#e05a10"/></svg></span>
    <span class="tb"><svg viewBox="0 0 24 24"><path d="M2 8l8-6h12v15l-8 6H2z" fill="#fff" stroke="#222"/><path d="M2 8h12v15M14 8l8-6" stroke="#222" fill="none"/><path d="M7 9l7-4 6 3v8l-7 4-6-3z" fill="#e81028"/><path d="M13 12v8l7-4V8z" fill="#a00818"/></svg></span>
    <span class="tb"><svg viewBox="0 0 24 24"><path d="M6 10h12l4 9v3H2v-3z" fill="#d8d8d8" stroke="#333"/><path d="M4 2h16l-3 10-2 3H9l-2-3z" fill="#e89418"/><path d="M2 19h4l3-4h6l3 4h4" stroke="#333" fill="none"/></svg></span>
    <span class="tb"><svg viewBox="0 0 24 24"><path d="M1 10l11 5v9L1 18z" fill="#bcd4f0" stroke="#3a68a8"/><path d="M12 15l9-6v8l-9 7z" fill="#7ea8e0" stroke="#3a68a8"/><rect x="9" y="1" width="8" height="11" fill="#fff" stroke="#222"/><text x="11.500" y="10" font-size="9" font-family="Liberation Serif" font-weight="700" fill="#111">i</text><path d="M13 14l9-8M14 15h5" stroke="#d03030" stroke-width="1.200"/><circle cx="22" cy="6" r="1.500" fill="#d01010"/></svg></span>
    <span class="tb"><svg viewBox="0 0 24 24"><path d="M7 2h17l-6 11H1z" fill="#7a7af0" stroke="#4a4ac8"/><path d="M5 5h16M3 9h16M11 2l-5 11M16 2l-5 11M21 2l-5 11" stroke="#c8c8ff"/><path d="M4 14v6M10 15v7M15 15v6M20 13v5" stroke="#e07810" stroke-width="1.200"/><path d="M2 19h4l-2 3zM8 21h4l-2 3zM13 20h4l-2 3zM18 17h4l-2 3z" fill="#f09018"/></svg></span>
    <span class="tb"><svg viewBox="0 0 24 24"><path d="M3 8L20 3l3 14-17 4z" fill="#d8e8fa" stroke="#3a3a5a"/><circle cx="3" cy="8" r="2" fill="#d01010"/><circle cx="20" cy="3" r="2" fill="#d01010"/><circle cx="23" cy="17" r="2" fill="#d01010"/><circle cx="6" cy="21" r="2" fill="#d01010"/></svg></span>
    <span class="tb"><svg viewBox="0 0 24 24" fill="none"><path d="M2 2l14 14M16 2L2 16" stroke="#111" stroke-width="1.800"/><path d="M19 1h2v15h-2M1 18v3h15v-3" stroke="#111"/><path d="M6 21l4 3M10 21l-4 3" stroke="#c01010"/><path d="M20 6l3 4M23 6l-3 4" stroke="#c01010"/></svg></span>
    <span class="tb"><svg viewBox="0 0 24 24"><circle cx="12" cy="12" r="10" fill="none" stroke="#5a2890" stroke-width="1.300" stroke-dasharray="10 1"/><circle cx="12" cy="12" r="1.200" fill="#5a2890"/><path d="M20 1v5M18 3.500h5M20 19v5M18 21.500h5M4 19v5M2 21.500h5" stroke="#d01010"/></svg></span>
    <span class="tb"><svg viewBox="0 0 24 24"><path d="M2 7l9-5 11 4v12l-9 5-11-5z" fill="#b8cff2" stroke="#3a68b8" stroke-width="1.200"/><path d="M13 11v12l9-5V6z" fill="#3a6ac0"/><path d="M2 7l11 4 9-5M11 2v12L2 18M11 14l11 4" stroke="#3a68b8" fill="none"/></svg></span>
    <span class="tb"><svg viewBox="0 0 24 24"><rect x="2" y="1" width="9" height="22" fill="url(#gr)"/><path d="M13 8l8 15" stroke="#3a4aa8" stroke-width="2.500"/><path d="M15 1l1 5 4 1-4 1-1 5-1-5-4-1 4-1z" fill="#fff"/></svg></span>
    <span class="tb"><svg viewBox="0 0 24 24"><path d="M2 6c0-6 20-6 20 0v12c0 6-20 6-20 0z" fill="#18b838"/><ellipse cx="12" cy="6" rx="10" ry="5" fill="#f4e020" stroke="#c81010"/><ellipse cx="12" cy="6" rx="5" ry="3" fill="#c81040"/><ellipse cx="12" cy="6" rx="3" ry="1.500" fill="#1834c8"/></svg></span>
    <span class="tb"><svg viewBox="0 0 24 24"><path d="M2 12l10-4v-6l10 4v10l-10 6-10-4z" fill="#f4e020" stroke="#c01010"/><path d="M2 12l10 4 10-4M12 8l6 3M12 16v6" stroke="#c01010" fill="none"/><path d="M12 2l-6 6 6 3 6-5z" fill="#1c38c8"/><path d="M8 12l4-4 6 3-4 4z" fill="#f09018"/></svg></span>
    <span class="tb"><svg viewBox="0 0 24 24"><path d="M2 22V10c8 0 13 6 13 12z" fill="none" stroke="#b01818" stroke-width="1.300"/><path d="M1 22h22" stroke="#b01818"/><path d="M6 2l2-2 16 13-3 3z" fill="#f4d860" stroke="#a08030"/><path d="M9 4l1-1M12 6l1-1M15 9l1-1M18 11l1-1" stroke="#c01010"/></svg></span>
    <span class="tb"><svg viewBox="0 0 24 24"><rect x="1" y="1" width="22" height="15" fill="#fff" stroke="#1834c8"/><text x="4" y="13" font-size="11.500" font-weight="700" fill="#e01010" font-family="Liberation Sans">KG</text><path d="M12 16v2" stroke="#c01010"/><path d="M4 18h10v5H4z" fill="#f4c820" stroke="#d01010"/></svg></span>
    <span class="tb"><svg viewBox="0 0 24 24"><path d="M2 18l10-4 10 4-10 5z" fill="#a8c8e8" stroke="#7a9ab8"/><path d="M11 8h5v9h-5z" fill="#7aa0d0"/><path d="M8 10c-2-4 0-8 5-8s7 2 7 5M16 2l4 1 1 4" stroke="#2a5aa8" stroke-width="1.800" fill="none"/></svg></span>
    <span class="tb"><svg viewBox="0 0 24 24"><path d="M1 13l5-3 6 2v8l-6 3-5-3z" fill="#10c028" stroke="#0a2a8a"/><path d="M12 6l5-4 6 2v8l-6 3-5-3z" fill="#10c028" stroke="#0a2a8a"/><path d="M11 11l3 2-1 3-3-1z" fill="#ffee00"/><path d="M6 13v10M17 6v9" stroke="#0a2a8a"/></svg></span>
    <span class="tb"><svg viewBox="0 0 24 24"><text x="1" y="9" font-size="8" fill="#0818d8" font-family="Liberation Mono" font-weight="700">PRT</text><path d="M6 23c5 0 8-3 10-6l-2-1 8-4-1 8-2-2c-2 3-6 6-13 5z" fill="#0818d8"/></svg></span>
    <span class="tb"><svg viewBox="0 0 24 24"><path d="M1 1h13v5H1z" fill="#ffee00" stroke="#111"/><path d="M6 6v17M6 10h5M6 17h5M6 22h5" stroke="#111" stroke-width="1.500" fill="none"/><rect x="10" y="8" width="14" height="5" fill="#ffee00" stroke="#111"/><path d="M12 10h2M15 10h2M18 10h2" stroke="#111"/><rect x="10" y="15" width="14" height="3.500" fill="#ffee00" stroke="#111"/><rect x="10" y="20" width="14" height="3.500" fill="#ffee00" stroke="#111"/></svg></span>
    <span class="tb"><svg viewBox="0 0 24 24"><path d="M2 6l10-4 10 4-10 4zM2 11l10 4 10-4M2 15l10 4 10-4M2 19l10 4 10-4" fill="#90c8a0" stroke="#4a5a50"/><path d="M7 5l5-2 5 2-5 2z" fill="#7a8ab8"/></svg></span>
    <span class="tb"><svg viewBox="0 0 24 24"><rect x="15" y="1" width="8" height="8" fill="#fff" stroke="#111"/><rect x="9" y="8" width="7" height="7" fill="#fff" stroke="#111"/><rect x="2" y="15" width="8" height="8" fill="#f4e020" stroke="#d01010" stroke-width="1.300"/></svg></span>
    <span class="tb"><svg viewBox="0 0 24 24"><path d="M2 17l10-5 10 4-9 6z" fill="#f4c820" stroke="#a07810"/><path d="M9 2v10M9 12l-4 3M9 12l9 3" stroke="#d01010"/><text x="5" y="7" font-size="6.500" fill="#d01010" font-family="Liberation Mono">Z</text><text x="14" y="6" font-size="6.500" fill="#d01010" font-family="Liberation Mono">Y</text><text x="19" y="12" font-size="6.500" fill="#d01010" font-family="Liberation Mono">X</text></svg></span>
    <span class="tb"><svg viewBox="0 0 24 24" fill="#f4c850" stroke="#c89820" stroke-width=".8"><path d="M3 2l6-1 2 3v5l-6 1-2-3zM3 14l6-1 2 3v5l-6 1-2-3zM14 14l6-1 2 3v5l-6 1-2-3z"/></svg></span>
    <span class="tb"><svg viewBox="0 0 24 24"><path d="M5 9l14-6c5-1 5 9 0 12L7 20C1 21 0 11 5 9z" fill="#a4c8ec" stroke="#5a84b8"/><ellipse cx="6.500" cy="14.500" rx="4.500" ry="5.500" fill="#d8e8f8" stroke="#5a84b8"/><ellipse cx="6.500" cy="14.500" rx="2.500" ry="3.200" fill="#5a7ab8"/></svg></span>
    <span class="tb"><svg viewBox="0 0 24 24"><path d="M3 5l7-2 2 2 8-2 2 8-1 9-9 2-8-2-2-8z" fill="#ffee00" stroke="#1834c8" stroke-width="1.200"/><path d="M12 5l-1 7-9 1M11 12l8 9M11 12l11-2" stroke="#d01010" fill="none"/></svg></span>
    <span class="tb"><svg viewBox="0 0 24 24"><rect x="7" y="3" width="10" height="19" fill="#10d818" stroke="#d01010" stroke-width="1.300"/><path d="M12 1v23" stroke="#1834c8" stroke-dasharray="2 1" stroke-width="1.300"/></svg></span>
    <span class="tb"><svg viewBox="0 0 24 24"><rect x="7" y="4" width="11" height="16" fill="#10d818" stroke="#1834c8"/><path d="M12.500 0l1.500 2-1.500 2-1.500-2zM12.500 20l1.500 2-1.500 2-1.500-2z" fill="none" stroke="#d01010"/></svg></span>
    <span class="tb"><svg viewBox="0 0 24 24"><rect x="2" y="6" width="20" height="13" fill="#10d818" stroke="#1834c8" stroke-width="1.300"/><circle cx="12" cy="12.500" r="1.800" fill="#f4e020" stroke="#d01010"/></svg></span>
    <span class="tb"><svg viewBox="0 0 24 24"><path d="M2 22l4-11 6-2" stroke="#111" fill="none"/><path d="M2 22l1-5 2 2z"/><text x="12" y="8" font-size="7.500" fill="#8a0808" font-family="Liberation Mono" font-weight="700">X=</text><text x="12" y="15" font-size="7.500" fill="#8a0808" font-family="Liberation Mono" font-weight="700">Y=</text><text x="12" y="22" font-size="7.500" fill="#8a0808" font-family="Liberation Mono" font-weight="700">Z=</text></svg></span>
    <span class="tb"><svg viewBox="0 0 24 24" fill="none" stroke="#18c030" stroke-width="2.200"><path d="M1 9l4 5 4-8M8 14l4 5 4-8M15 18l4 5 4-8"/></svg></span>
    <span class="tb"><svg viewBox="0 0 24 24"><path d="M3 9l8-6 12 1v12l-6 5H3z" fill="#8ab4f4" stroke="#c04040" stroke-dasharray="2 1"/><path d="M3 9h14v12M17 9l6-5" stroke="#c04040" stroke-dasharray="2 1" fill="none"/></svg></span>
    <span class="tb"><svg viewBox="0 0 24 24"><path d="M1 8l11-6 11 6-11 5z" fill="#b478e8"/><path d="M1 8l11 5v10L1 18z" fill="#f09c30"/><path d="M12 13l11-5v12l-11 3z" fill="#e8e8e8" stroke="#222"/><path d="M14 15h7v3h-7zM14 19h7v3h-7z" fill="#fff" stroke="#222"/></svg></span>
    <span class="tb"><svg viewBox="0 0 24 24"><rect x="1" y="8" width="15" height="15" fill="#2aa098" stroke="#111"/><circle cx="15" cy="10" r="8" fill="none" stroke="#111" stroke-width="1.300"/><path d="M1 3h9" stroke="#d01010" stroke-width="1.500"/></svg></span>
    <span class="tb"><span class="bigA">A</span></span>
    <span class="tb"><svg viewBox="0 0 24 24"><path d="M4 11c-4-5 2-10 9-10s11 4 10 9-5 3-7 5-3 5-7 4l-4 4-3-3 4-3c-2-2-1-4-2-6z" fill="#f4d898" stroke="#a87a28"/><circle cx="9" cy="5" r="2" fill="#1c9cf0"/><circle cx="15" cy="4" r="2" fill="#f0d020"/><circle cx="19" cy="8" r="2" fill="#f04040"/><circle cx="17" cy="13" r="1.800" fill="#20b030"/></svg></span>
    <span class="tb"><svg viewBox="0 0 24 24" fill="none"><rect x="0" y="0" width="24" height="24" fill="#c8c8c8" stroke="#888"/><circle cx="7" cy="12" r="5.500" stroke="#b07070"/><circle cx="7" cy="12" r="2.500" stroke="#b07070"/><circle cx="17" cy="6" r="4.500" stroke="#70a070"/><circle cx="17" cy="18" r="5" stroke="#7078b0"/></svg></span>
    <span class="tb"><svg viewBox="0 0 24 24"><path d="M1 5l7 4 3-8 5 10 3-2 4 15-9-8-2 3z" fill="#ffee00" stroke="#e01010" stroke-width="1.200"/></svg></span><span class="cr lo"></span>
  </div>
</div>

<!-- selection bar -->
<div class="r4 d-flex align-items-center">
  <div class="combo c1"><span class="lab">没有选择过滤器</span><span class="dd"></span></div>
  <div class="combo c2"><span class="lab">仅在工作部件内</span><span class="dd"></span></div>
  <span class="t4 ms2"><svg viewBox="0 0 20 20"><path d="M2 8l5-2 4 2v8l-4 3-5-3zM11 4l4-3 4 3v6l-4 2-4-2z" fill="#a2a2a2" stroke="#777"/></svg></span>
  <i class="vsep me-1 sa"></i>
  <span class="t4 w22"><svg viewBox="0 0 20 20"><path d="M2 3c2-2 5-2 6 0l-1 2 3 0-2 3-3-2 1-1C5 4 4 4 3 5zM8 10h11l-4 5v4h-3v-4z" fill="#8f8f8f"/></svg></span>
  <span class="t4 w20"><svg viewBox="0 0 20 20"><rect x=".5" y=".5" width="19" height="19" fill="#d6d6d6" stroke="#d01010"/><path d="M7 2v9M3 6.500h9" stroke="#111"/><circle cx="7" cy="6.500" r="2" fill="#d01010"/><path d="M10 11h8l-3 3v4h-2v-4z" fill="#f0a820"/></svg></span><span class="cr cw"></span>
  <span class="t4 ms3"><svg viewBox="0 0 20 20" fill="none" stroke="#999"><path d="M3 8c0-4 6-6 9-3l2-2M14 3v4h-4" stroke-width="1.500"/><circle cx="12" cy="13" r="5" stroke="#c09090"/><path d="M12 6v14M5 13h14" stroke="#c09090"/></svg></span>
  <span class="t4 w25"><svg viewBox="0 0 20 20"><path d="M1 3l6-2 6 5-3 2-2-2-4 3zM13 8h4v11h-4z" fill="#8e8e8e"/></svg></span>
  <i class="vsep sb"></i>
  <span class="t4"><svg viewBox="0 0 20 20" fill="none" stroke="#111" stroke-dasharray="2 1.500"><rect x="2" y="3" width="16" height="14"/><circle cx="2" cy="3" r="1" fill="#d01010" stroke="none"/><circle cx="18" cy="17" r="1" fill="#d01010" stroke="none"/></svg></span><span class="cr cw"></span>
  <i class="vsep sc"></i>
  <span class="t4 w24"><svg viewBox="0 0 20 20"><path d="M1 10l11-7 7 3v5l-10 6-8-3z" fill="#e8e8e8" stroke="#555"/><path d="M5 9l7-4M8 10l5-3" stroke="#d03030"/><path d="M1 10l8 3v4" stroke="#555" fill="none"/></svg></span>
  <span class="t4 w24"><svg viewBox="0 0 20 20"><path d="M1 5l9-4 9 4v10l-9 5-9-5z" fill="#7eb4f0"/><path d="M1 5l9 4 9-4" stroke="#d06060" fill="none" stroke-dasharray="2 1"/><path d="M10 9v11" stroke="#d06060" stroke-dasharray="2 1"/><path d="M10 9l9-4v10l-9 5z" fill="#5a90d8"/></svg></span>
  <i class="vsep sd"></i>
  <span class="t4 boxed"><svg viewBox="0 0 20 20"><path d="M2 3l4 2-4 2z" fill="#18a018"/><path d="M2 13l4 2-4 2z" fill="#d01010"/><path d="M10 3l7 7-7 7-5-7z" fill="none" stroke="#111" stroke-dasharray="2 1"/><circle cx="11" cy="10" r="2.500" fill="#f0c020" stroke="#111"/></svg></span>
  <span class="t4 boxed"><svg viewBox="0 0 20 20"><path d="M3 17L17 3" stroke="#111"/><circle cx="15" cy="5" r="2" fill="#d01010"/></svg></span>
  <span class="t4 boxed"><svg viewBox="0 0 20 20"><path d="M3 17L17 3" stroke="#111"/><circle cx="10" cy="10" r="2" fill="#d01010"/></svg></span>
  <span class="t4"><svg viewBox="0 0 20 20"><path d="M2 3c6-2 5 5 7 8s4 6 8 5" stroke="#111" stroke-width="1.400" fill="none"/><circle cx="9" cy="10" r="2" fill="#d01010"/></svg></span>
  <span class="t4 boxed"><svg viewBox="0 0 20 20"><path d="M2 12L7 4l5 12 6-8" stroke="#8a2090" fill="none"/><circle cx="2" cy="12" r="1.800" fill="#d01010"/><circle cx="7" cy="4" r="1.800" fill="#d01010"/><circle cx="12" cy="16" r="1.800" fill="#d01010"/><circle cx="18" cy="8" r="1.800" fill="#d01010"/></svg></span>
  <span class="t4"><svg viewBox="0 0 20 20"><path d="M1 15c2-6 5-8 9-8s7 3 9 8M10 2v15" stroke="#111" fill="none"/><circle cx="10" cy="7" r="1.800" fill="#d01010"/></svg></span>
  <span class="t4 boxed"><svg viewBox="0 0 20 20"><circle cx="10" cy="10" r="7" fill="none" stroke="#111" stroke-width="1.400"/><circle cx="10" cy="10" r="2" fill="#d01010"/></svg></span>
  <span class="t4"><svg viewBox="0 0 20 20"><circle cx="10" cy="10" r="7" fill="none" stroke="#111" stroke-width="1.400"/><circle cx="3" cy="10" r="1.800" fill="#d01010"/><circle cx="17" cy="10" r="1.800" fill="#d01010"/><circle cx="10" cy="3" r="1.800" fill="#d01010"/><circle cx="10" cy="17" r="1.800" fill="#d01010"/></svg></span>
  <span class="t4 boxed"><svg viewBox="0 0 20 20"><path d="M10 2v16M2 10h16" stroke="#111" stroke-width="1.300"/><circle cx="10" cy="10" r="2" fill="#d01010"/></svg></span>
  <span class="t4 boxed"><svg viewBox="0 0 20 20"><path d="M3 17L17 3" stroke="#111"/><circle cx="8" cy="12" r="2" fill="#d01010"/></svg></span>
  <span class="t4"><svg viewBox="0 0 20 20"><path d="M2 6c5-6 13-5 16 0v6c-2 2-2 5-1 7-3-5-10-7-15-5z" fill="#b4d0f4" stroke="#6a90c8"/><circle cx="9" cy="9" r="2" fill="#d01010"/></svg></span>
  <i class="vsep se"></i>
  <span class="t4"><svg viewBox="0 0 20 20" stroke="#222" fill="none"><path d="M3 3l13 2-1 13-11-2zM7 3.500l-1 13M11 4l-1 13M3.500 7.500l12.500 1M3.500 12l12 1"/><circle cx="10" cy="10" r="1.500" fill="#d01010"/></svg></span>
  <span class="cr ms-auto"></span>
</div>

<!-- work area -->
<div class="workarea d-flex">
  <div class="viewport">
    <svg viewBox="0 179 1040 527" xmlns="http://www.w3.org/2000/svg">
      <!-- cylinder -->
      <path d="M267 424L749 295C778 340 806 450 813 533L333 664C328 590 303 490 267 424Z" fill="url(#gbody)" stroke="#2c3335" stroke-width=".6"/>
      <path d="M267 424C259 430 270 510 289 572C304 620 322 655 333 664C329 592 303 490 267 424Z" fill="#67777b" stroke="#2c3335" stroke-width=".7"/>
      <path d="M276 456C268 470 283 545 297 590C309 625 322 640 326 640C332 590 304 482 276 456Z" fill="url(#ghole)" stroke="#1e2325" stroke-width=".8"/>
      <!-- boss and hole -->
      <ellipse cx="556" cy="485" rx="79" ry="81" fill="url(#gboss)" stroke="#4a5255" stroke-width=".4"/>
      <ellipse cx="578" cy="500" rx="82" ry="83" fill="#98abb1" stroke="#1e2325" stroke-width=".8"/>
      <ellipse cx="575" cy="499" rx="59" ry="58" fill="url(#gin)" stroke="#1e2325" stroke-width=".8"/>
      <path d="M532 538C560 552 600 550 618 520C626 505 624 478 610 460" fill="none" stroke="#20262a" stroke-width=".7"/>
      <path d="M527 530C552 547 590 545 610 518C620 502 618 475 605 458" fill="none" stroke="#dfe6e8" stroke-width=".5"/>
      <ellipse cx="561" cy="490" rx="44" ry="48" fill="url(#glit)" stroke="#1e2325" stroke-width=".7"/>
      <path d="M587 460L603 500" stroke="#222" stroke-width=".7"/>
      <path d="M589 455C600 462 608 470 608 472L603 500C603 480 598 466 587 458Z" fill="#8d9b9f"/>
      <!-- work csys -->
      <g fill="none" stroke-width="1">
        <path d="M520 410L539 483" stroke="#c9c5c5"/>
        <path d="M523 437L569 429L579 468" stroke="#d8d2d2"/>
        <path d="M525 437L539 480M539 480L605 462M528 474L539 483M579 468L539 480M569 429L579 468" stroke="#b85a5a"/>
      </g>
      <path d="M521 395L524 415L519 414Z" fill="#a8a8a8"/>
      <path d="M604 460L619 458L604 464Z" fill="#fff"/>
      <circle cx="529" cy="474" r="3" fill="#a84a4a"/>
      <g font-family="Liberation Sans,sans-serif" fill="#c8c8c8" font-size="11"><text x="514" y="400">Y</text><text x="621" y="462">Z</text><text x="522" y="476" fill="#aaa">X</text></g>
      <!-- view triad -->
      <path d="M39 636l17-5c3 0 5 1 6 4l2 11c0 2-1 3-3 4l-15 4z" fill="#aeaeae" stroke="#8e8e8e"/>
      <path d="M39 630L45 656" stroke="#1f8a2c" stroke-width="2"/>
      <path d="M46 656L76 648" stroke="#1848d8" stroke-width="2"/>
      <path d="M66 648l11-2-8 5z" fill="#1848d8"/>
      <g font-family="Liberation Sans,sans-serif" font-size="11"><text x="33" y="626" fill="#1f8a2c">Y</text><text x="78" y="651" fill="#1848d8">Z</text><text x="37" y="658" fill="#b82828">X</text></g>
      <circle cx="46" cy="656" r="4" fill="#c4c4c4"/>
    </svg>
  </div>

  <div class="partnav d-flex flex-column">
    <div class="navhead d-flex align-items-center"><i></i>部件导航器</div>
    <div class="treebox">
      <div class="treehead d-flex"><div>名称<span class="sorttri"></span></div><div>最新</div></div>
      <div class="treescroll">
        <table class="table nav-tbl">
          <tbody>
            <tr><td class="lv0"><div class="nodecell"><svg viewBox="0 0 16 16"><circle cx="8" cy="8" r="7" fill="#e8eef8" stroke="#667"/><path d="M8 3v5h4" stroke="#111" fill="none"/></svg><span>历史记录模式</span></div></td><td></td></tr>
            <tr><td class="lv0"><div class="nodecell"><svg viewBox="0 0 16 16" fill="none" stroke="#18a060"><path d="M8 1l6 3v7l-6 4-6-4V4zM2 4l6 3 6-3M8 7v8M5 2.500l6 7M11 2.500l-6 7"/><path d="M10 14l4-3" stroke="#d01010"/></svg><span>模型视图</span></div></td><td></td></tr>
            <tr><td class="lv0"><div class="nodecell"><svg viewBox="0 0 14 14"><use href="#tick"/></svg><svg viewBox="0 0 16 16"><path d="M1 4l12-3 2 9-12 4z" fill="#fff" stroke="#d01010"/><circle cx="7" cy="8" r="3" fill="#3a58c8"/><path d="M10 8h4v5h-4z" fill="#fff" stroke="#222"/></svg><span>摄像机</span></div></td><td></td></tr>
            <tr><td class="lv0"><div class="nodecell"><svg viewBox="0 0 16 16"><use href="#fldr"/><path d="M9 1h7M9 3h7" stroke="#1834a8"/></svg><span>用户表达式</span></div></td><td></td></tr>
            <tr><td class="lv0"><div class="nodecell"><svg viewBox="0 0 16 16"><use href="#fldr"/></svg><span>模型历史记录</span></div></td><td></td></tr>
            <tr><td class="lv1"><div class="nodecell"><svg class="chk"><use href="#cbx"/></svg><svg viewBox="0 0 16 16" fill="none"><path d="M3 1v8h9M3 9l7 5" stroke="#333"/><path d="M10 3L3 9l9 3" stroke="#2a9a4a"/><path d="M1 3l2-2 2 2" stroke="#1834a8"/><circle cx="3" cy="9" r="1.500" fill="#d01010"/></svg><span>基准坐标系（<span class="mono m0">0</span>）</span></div></td><td class="okcol"><svg><use href="#tick"/></svg></td></tr>
            <tr><td class="lv1"><div class="nodecell"><svg class="chk"><use href="#cbx"/></svg><svg><use href="#ext"/></svg><span>拉伸（<span class="mono m0">1</span>）</span></div></td><td class="okcol"><svg><use href="#tick"/></svg></td></tr>
            <tr><td class="lv1"><div class="nodecell"><svg class="chk"><use href="#cbx"/></svg><svg><use href="#ext"/></svg><span>拉伸（<span class="mono m0">2</span>）</span></div></td><td class="okcol"><svg><use href="#tick"/></svg></td></tr>
            <tr><td class="lv1"><div class="nodecell"><svg class="chk"><use href="#cbx"/></svg><svg viewBox="0 0 16 16"><path d="M2 1h12v4l-3 1v5l-3 4-3-4V6L2 5z" fill="#93a8c0" stroke="#4a5a78"/><path d="M8 6v8" stroke="#e8eef4"/></svg><span>沉头孔（<span class="mono m0">3</span>）</span></div></td><td class="okcol"><svg><use href="#tick"/></svg></td></tr>
            <tr><td class="lv1"><div class="nodecell"><svg class="chk"><use href="#cbx"/></svg><svg viewBox="0 0 16 16"><path d="M1 3h14l-2 8-3 4H6l-3-4z" fill="#f09828"/><path d="M3 1h6v13H5z" fill="#1c48c0"/><path d="M9 4l3 0v5h-3z" fill="#e01010"/></svg><span>旋转（<span class="mono m0">4</span>）</span></div></td><td class="okcol"><svg><use href="#tick"/></svg></td></tr>
            <tr><td class="lv1"><div class="nodecell"><svg class="chk"><use href="#cbx"/></svg><svg viewBox="0 0 16 16"><path d="M1 5l7-4 7 4v9l-7 2-7-3z" fill="#f09c30" stroke="#a06010" stroke-width=".5"/><path d="M1 5l7-4 7 4-7 3z" fill="#b478e8"/><rect x="7" y="8" width="7" height="7" fill="#fff" stroke="#111"/></svg><span>偏置区域（<span class="mono m0">5</span>）</span></div></td><td class="okcol"><svg><use href="#tick"/></svg></td></tr>
            <tr><td class="lv1 fw-bold"><div class="nodecell"><svg class="chk"><use href="#cbx"/></svg><svg><use href="#ext"/></svg><span>拉伸（<span class="mono m0 fw-bold">6</span>）</span></div></td><td class="okcol"><svg><use href="#tick"/></svg></td></tr>
            <tr><td></td><td></td></tr><tr><td></td><td></td></tr><tr><td></td><td></td></tr><tr><td></td><td></td></tr><tr><td></td><td></td></tr><tr><td></td><td></td></tr><tr><td></td><td></td></tr>
          </tbody>
        </table>
        <svg class="treelines" viewBox="0 0 60 240" fill="none" stroke="#888" stroke-dasharray="1 1">
          <path d="M9.500 10v75M9.500 10h9M14 30h5M14 50h5M9.500 70h9M28.500 95v135M28.500 110h11M28.500 130h11M28.500 150h11M28.500 170h11M28.500 190h11M28.500 210h11M28.500 230h11"/>
          <g stroke-dasharray="none" stroke="#777"><path fill="#fff" d="M5.500 26.500h8v8h-8zM5.500 46.500h8v8h-8zM5.500 86.500h8v8h-8z"/><path d="M7.500 30.500h4M9.500 28.500v4M7.500 50.500h4M9.500 48.500v4M7.500 90.500h4" stroke="#111"/></g>
        </svg>
      </div>
      <div class="hscroll"><span class="hb">‹</span><div class="thm"></div><div class="trk"></div><span class="hb">›</span></div>
    </div>
    <div class="sash d-flex align-items-center"><i></i><b></b><i></i></div>
    <div class="accbar"><span class="lbl">相依性</span><span class="chev"><svg width="14" height="10" fill="none" stroke="#666" stroke-width="2.600"><path d="M1 1l6 7 6-7"/></svg></span></div>
    <div class="accbar"><span class="lbl">细节</span><span class="chev"><svg width="14" height="10" fill="none" stroke="#666" stroke-width="2.600"><path d="M1 1l6 7 6-7"/></svg></span></div>
    <div class="accbar"><span class="lbl">预览</span><span class="chev"><svg width="14" height="10" fill="none" stroke="#666" stroke-width="2.600"><path d="M1 1l6 7 6-7"/></svg></span></div>
  </div>

  <div class="sidebar">
    <div class="gearcell"><svg width="16" height="16" viewBox="0 0 16 16" fill="none" stroke="#222"><circle cx="8" cy="8" r="4.500" stroke-width="1.800"/><path d="M8 0v3M8 13v3M0 8h3M13 8h3M2.300 2.300l2 2M11.700 11.700l2 2M13.700 2.300l-2 2M4.300 11.700l-2 2" stroke-width="1.600"/></svg></div>
    <div class="stab"><svg viewBox="0 0 24 26"><path d="M2 3l4-2 4 2v5l-4 2-4-2z" fill="#f8c838" stroke="#b08010"/><path d="M2 3l4 2 4-2M6 5v5M8 10l4-2 4 2v5l-4 2-4-2z" fill="#f8c838" stroke="#b08010"/><path d="M6 11v14M6 19h6" stroke="#1834c8"/><path d="M16 13h8" stroke="#111"/><path d="M14 19l4-2 4 2v5l-4 2-4-2z" fill="#f8c838" stroke="#b08010"/></svg></div>
    <div class="stab s2"><svg viewBox="0 0 24 26"><path d="M2 1l9 7-9 7zM22 1l-9 7 9 7z" fill="#0a18c0"/><path d="M12 1v25" stroke="#333" stroke-dasharray="2 1"/><rect x="1" y="15" width="9" height="9" fill="#ffee00" stroke="#111"/><path d="M14 14l9 10h-9z" fill="#c01010"/></svg></div>
    <div class="stab on s1"><svg viewBox="0 0 24 26"><ellipse cx="6" cy="3" rx="5" ry="2" fill="#d8a0d8" stroke="#7a1a7a"/><path d="M1 3v7c0 3 10 3 10 0V3" fill="#d8a0d8" stroke="#7a1a7a"/><path d="M13 10h9" stroke="#111"/><path d="M7 13v11M7 19h5" stroke="#1834c8"/><circle cx="17" cy="19" r="5" fill="none" stroke="#7a1a7a"/><circle cx="17" cy="19" r="2" fill="none" stroke="#7a1a7a"/></svg></div>
    <div class="stab s1"><svg viewBox="0 0 24 26"><path d="M2 6l4-3h4l-3 3v19H2z" fill="#f08c20" stroke="#a05a10"/><path d="M9 6l4-3h4l-3 3v19H9z" fill="#20c030" stroke="#108018"/><path d="M16 6l4-3h4l-3 3v19h-5z" fill="#3a98ea" stroke="#1860a8"/></svg></div>
    <div class="stab s15"><svg viewBox="0 0 24 26"><path d="M10 6c5 0 9 4 9 9M10 2c8 0 13 6 13 13" fill="none" stroke="#3a78d0" stroke-width="2.200"/><circle cx="9" cy="17" r="8" fill="#1c78d8" stroke="#0a4a98"/><text x="7" y="22" fill="#fff" font-size="13" font-weight="700" font-family="Liberation Serif">i</text></svg></div>
    <div class="stab s13"><svg viewBox="0 0 24 26"><path d="M3 1h12l6 6v18H3z" fill="#fff" stroke="#2a58b8"/><circle cx="12" cy="15" r="6" fill="#20a038"/><circle cx="12" cy="15" r="3" fill="#fff"/></svg></div>
    <div class="stab s15"><svg viewBox="0 0 24 26"><circle cx="12" cy="13" r="10.500" fill="#dfe8f8" stroke="#4a5a78" stroke-width="2"/><path d="M12 5v8h6" stroke="#111" stroke-width="2" fill="none"/></svg></div>
    <div class="stab s3"><svg viewBox="0 0 24 26"><rect x="2" y="2" width="8" height="22" fill="url(#gr)"/><path d="M13 9l8 14" stroke="#222" stroke-width="2.500"/><path d="M15 2l1 5 4 1-4 1-1 5-1-5-4-1 4-1z" fill="#fff"/></svg></div>
    <div class="stab s3"><svg viewBox="0 0 24 26"><path d="M3 9h6v13H3z" fill="#3a8ae0"/><path d="M9 9l12-4M9 12l10-2" stroke="#1834a8"/><path d="M4 23l3-3 3 3z" fill="#f4e060"/><path d="M12 9l8 12" stroke="#222" stroke-width="2"/></svg></div>
    <div class="sbtn first"><svg width="9" height="9" fill="#bbb"><path d="M0 0h9v1H0zM4.500 2L9 8H0z"/></svg></div>
    <div class="sbtn"><svg width="9" height="9" fill="#bbb"><path d="M4.500 2L9 8H0z"/></svg></div>
    <div class="sbtn"><svg width="9" height="9" fill="#444"><path d="M4.500 7L0 1h9z"/></svg></div>
    <div class="sbtn"><svg width="9" height="9" fill="#444"><path d="M4.500 6L0 0h9zM0 8h9v1H0z"/></svg></div>
    <div class="sldr"><i></i><i></i><i></i><i></i><i></i><i></i><i></i><i class="g"></i><i class="g"></i><i class="g"></i><i class="g"></i><i class="g"></i></div>
  </div>
</div>

<!-- status bar -->
<div class="statusbar d-flex align-items-center">
  <span>选择对象并使用 <span class="mono fw-bold">MB3</span>，或者双击某一对象</span>
  <div class="stcell stc1 ms-auto"></div>
  <div class="stcell stc2 d-flex align-items-center">
    <svg width="16" height="16" viewBox="0 0 16 16"><rect width="16" height="16" fill="#7a8d98"/><path d="M3 3h4v3H3zM7 6h4v3H7zM3 9h4v3H3zM11 3h2v3h-2zM11 9h2v3h-2z" fill="#555"/></svg>
    <svg width="16" height="16" viewBox="0 0 16 16" class="ms-1"><path d="M1 4V1h3M12 1h3v3M15 12v3h-3M4 15H1v-3" fill="none" stroke="#555"/><rect x="3" y="3" width="10" height="10" fill="#fff" stroke="#555"/><rect x="4" y="5" width="8" height="6" fill="#2c7ad0"/></svg>
  </div>
  <div class="stcell stc3"></div>
</div>

<!-- taskbar -->
<div class="taskbar d-flex align-items-center">
  <svg class="winlogo" width="28" height="28" viewBox="0 0 28 28" fill="#fff"><path d="M1 5l11-2v10H1zM14 3l13-2v12H14zM1 15h11v10L1 23zM14 15h13v12l-13-2z"/></svg>
  <div class="tkitem"><svg viewBox="0 0 34 34"><path d="M3 9l1-3h9l2 3h16v18H3z" fill="#f5e9a8" stroke="#b39a50"/><path d="M5 6h5v2H5z" fill="#22a038"/><path d="M11 6h5v2h-5z" fill="#d83030"/><path d="M20 7h6v2h-6z" fill="#38a0e0"/><path d="M8 22h18v-5H8z" fill="#9fd0f0" stroke="#5a90b8"/><path d="M10 31v-9M24 31v-9M7 22h20" stroke="#5a90b8" stroke-width="2.500"/></svg></div>
  <div class="tkitem cur"><svg><use href="#nxl"/></svg></div>
  <div class="tkitem"><svg viewBox="0 0 34 34"><path d="M6 7c-3 6-3 14 0 20l4 1V6z" fill="#f59a12"/><path d="M9 4c-2 8-2 18 0 26l23-11c2-1 2-3 0-4z" fill="#2cc2f0"/><path d="M9 18v12l23-11c1-1 1-1 1-2z" fill="#23b0ea"/><path d="M11 11v12l13-6z" fill="#fff"/><path d="M9 10l4 13-4 7z" fill="#9adf2a"/></svg></div>
  <div class="tkitem"><svg viewBox="0 0 34 34"><circle cx="17" cy="17" r="15" fill="#e3b11b"/><path d="M17 2a15 15 0 00-13 7.500l7 12L17 17h15A15 15 0 0017 2z" fill="#d83b2d"/><path d="M4 9.500a15 15 0 0011 22l7-12-11 2z" fill="#2f9a48"/><circle cx="17" cy="17" r="7" fill="#fff"/><circle cx="17" cy="17" r="5.500" fill="#3d7fe0"/></svg></div>
  <div class="tkitem hot"><svg viewBox="0 0 34 34"><circle cx="16" cy="18" r="14" fill="#ea3a6a"/><path d="M22 2c6 3 10 9 10 16 0 8-6 14-14 14C25 30 28 22 25 15 24 10 22 6 22 2z" fill="#fca11e"/><path d="M4 16c1-6 7-9 13-8-3 1-5 3-5 5 4-2 10 0 10 6s-6 9-11 7c4 0 6-3 5-5-4 1-9-1-12-5z" fill="#f8b71c"/><circle cx="16" cy="18" r="6" fill="#6a3dc0"/></svg></div>
  <div class="tkitem"><svg viewBox="0 0 34 34"><rect width="33" height="33" rx="6" fill="#1f88f0"/><circle cx="16.500" cy="16.500" r="11" fill="none" stroke="#fff" stroke-width="2.500"/><path d="M13 10v13M14 17l6-7M14.500 16l6 7" stroke="#fff" stroke-width="3" fill="none"/></svg></div>
  <div class="tkitem"><svg viewBox="0 0 34 34"><rect width="33" height="33" rx="6" fill="#fff"/><circle cx="16.500" cy="10" r="4.500" fill="none" stroke="#e24444" stroke-width="2.800"/><circle cx="9" cy="19" r="5" fill="none" stroke="#34a8f0" stroke-width="2.800"/><circle cx="24" cy="19" r="5" fill="none" stroke="#34c8e0" stroke-width="2.800"/><path d="M13 30h7v3h-7z" fill="#f05a7a"/></svg></div>
  <div class="tray">
    <svg class="trayic ti1" width="12" height="8"><path d="M6 1l5 5H1z" fill="#fff" stroke="#888" stroke-width=".5"/></svg>
    <svg class="trayic ti2" width="17" height="14" fill="#fff" stroke="#666" stroke-width=".5"><path d="M1 11h2v3H1zM5 8h2v6H5zM9 5h2v9H9zM13 1h3v13h-3z"/></svg>
    <svg class="trayic ti3" width="14" height="20" fill="#fff" stroke="#777" stroke-width=".6"><path d="M1 6h4l6-5v18l-6-5H1z"/></svg>
    <span class="trayic ti4">中</span>
    <svg class="trayic ti5" width="16" height="16"><rect width="16" height="16" rx="2" fill="#e8431a"/><path d="M12 4c-3-1-8-1-8 2 0 3 8 1 8 4 0 2-4 3-8 1" fill="none" stroke="#fff" stroke-width="2"/></svg>
    <span class="clock">16:26</span>
    <span class="dat">2019/5/1</span>
    <span class="wm">UG爱好者论坛@手机a f</span>
  </div>
</div>

<!-- sogou input bar -->
<div class="imebar">
  <div class="body">
    <span class="imeitem first">中</span>
    <span class="imeitem"><svg viewBox="0 0 17 17" fill="#1273d6"><circle cx="5" cy="5" r="2"/><path d="M12 7c2 0 2 2 1 4l-2 3-1-1 1-2c-1-2-1-4 1-4z"/></svg></span>
    <span class="imeitem"><svg viewBox="0 0 17 17" fill="#1273d6"><rect x="6" y="1" width="5" height="9" rx="2.500"/><path d="M3 7c0 8 11 8 11 0M8.500 12v3M5 16h7" fill="none" stroke="#1273d6" stroke-width="1.500"/></svg></span>
    <span class="imeitem"><svg viewBox="0 0 17 17"><rect x="1" y="3" width="15" height="11" rx="1" fill="#1273d6"/><path d="M3 6h2M6 6h2M9 6h2M12 6h2M3 8.500h2M6 8.500h2M9 8.500h2M12 8.500h2M5 11h7" stroke="#fff"/></svg></span>
    <span class="imeitem"><svg viewBox="0 0 17 17"><path d="M1 4l4-2 2 1h3l2-1 4 2-2 4-2-1v8H4V7L2 8z" fill="#7a5ae8"/></svg></span>
    <span class="imeitem"><svg viewBox="0 0 17 17" fill="#1273d6"><rect x="1" y="1" width="7" height="7" rx="2"/><rect x="9" y="1" width="7" height="7" rx="2"/><rect x="1" y="9" width="7" height="7" rx="2"/><rect x="9" y="9" width="7" height="7" rx="2"/></svg></span>
  </div>
  <svg class="logo" viewBox="0 0 32 30"><path d="M2 7L25 0l6 22L9 29z" fill="#f2541b"/><path d="M23 7C17 8 9 9 10 13c1 3 12 1 12 5 0 3-7 5-12 5" fill="none" stroke="#fff" stroke-width="3.500"/></svg>
</div>

<script src="https://cdn.jsdelivr.net/npm/bootstrap@5.3.2/dist/js/bootstrap.bundle.min.js"></script>
</body>
</html>
